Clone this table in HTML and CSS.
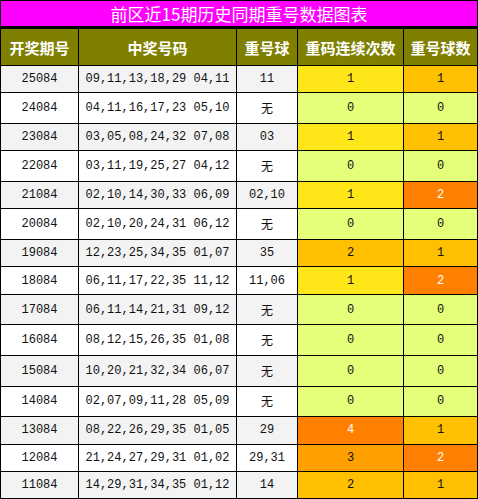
FILE: index.html
```html
<!DOCTYPE html>
<html>
    <head>
        <title>前区近15期历史同期重号数据图表</title>
        <link rel="stylesheet" href="styles.css">
    </head>
    <body>
        <div class="title">前区近15期历史同期重号数据图表</div>
        <table class="chart">
            <thead>
                <tr>
                    <th class="c-issue">开奖期号</th>
                    <th class="c-nums">中奖号码</th>
                    <th class="c-rep">重号球</th>
                    <th class="c-run">重码连续次数</th>
                    <th class="c-cnt">重号球数</th>
                </tr>
            </thead>
            <tbody>
                <tr><td>25084</td><td>09,11,13,18,29 04,11</td><td>11</td><td class="lv1">1</td><td class="lv2">1</td></tr>
                <tr class="empty"><td>24084</td><td>04,11,16,17,23 05,10</td><td>无</td><td class="lv0">0</td><td class="lv0">0</td></tr>
                <tr><td>23084</td><td>03,05,08,24,32 07,08</td><td>03</td><td class="lv1">1</td><td class="lv2">1</td></tr>
                <tr class="empty"><td>22084</td><td>03,11,19,25,27 04,12</td><td>无</td><td class="lv0">0</td><td class="lv0">0</td></tr>
                <tr><td>21084</td><td>02,10,14,30,33 06,09</td><td>02,10</td><td class="lv1">1</td><td class="lv4">2</td></tr>
                <tr class="empty"><td>20084</td><td>02,10,20,24,31 06,12</td><td>无</td><td class="lv0">0</td><td class="lv0">0</td></tr>
                <tr><td>19084</td><td>12,23,25,34,35 01,07</td><td>35</td><td class="lv2">2</td><td class="lv2">1</td></tr>
                <tr><td>18084</td><td>06,11,17,22,35 11,12</td><td>11,06</td><td class="lv1">1</td><td class="lv4">2</td></tr>
                <tr class="empty"><td>17084</td><td>06,11,14,21,31 09,12</td><td>无</td><td class="lv0">0</td><td class="lv0">0</td></tr>
                <tr class="empty"><td>16084</td><td>08,12,15,26,35 01,08</td><td>无</td><td class="lv0">0</td><td class="lv0">0</td></tr>
                <tr class="empty"><td>15084</td><td>10,20,21,32,34 06,07</td><td>无</td><td class="lv0">0</td><td class="lv0">0</td></tr>
                <tr class="empty"><td>14084</td><td>02,07,09,11,28 05,09</td><td>无</td><td class="lv0">0</td><td class="lv0">0</td></tr>
                <tr><td>13084</td><td>08,22,26,29,35 01,05</td><td>29</td><td class="lv4">4</td><td class="lv2">1</td></tr>
                <tr><td>12084</td><td>21,24,27,29,31 01,02</td><td>29,31</td><td class="lv3">3</td><td class="lv4">2</td></tr>
                <tr><td>11084</td><td>14,29,31,34,35 01,12</td><td>14</td><td class="lv2">2</td><td class="lv2">1</td></tr>
            </tbody>
        </table>
    </body>
</html>
```

FILE: styles.css
```css
body {
    margin: 0;
    background-color: white;
}
.title {
    box-sizing: border-box;
    height: 28px;
    line-height: 25px;
    background-color: #ff00ff;
    border: 1px solid black;
    border-bottom-width: 2px;
    color: white;
    font-family: "Noto Sans CJK SC", sans-serif;
    font-size: 17px;
    text-align: center;
}
.chart {
    width: 478px;
    border-collapse: collapse;
    table-layout: fixed;
    font-family: "Liberation Mono", "Noto Sans CJK SC", monospace;
    font-size: 12px;
}
.chart th,
.chart td {
    border: 1px solid black;
    padding: 0;
    text-align: center;
}
.chart th {
    height: 36px;
    background-color: #808000;
    color: white;
    font-family: "Noto Sans CJK SC", sans-serif;
    font-size: 15px;
    font-weight: bold;
}
.c-issue { width: 77px; }
.c-nums { width: 157px; }
.c-rep { width: 60px; }
.c-run { width: 105px; }
.chart td {
    height: 26.4px;
    color: #111;
}
.chart tr.empty td {
    height: 29.6px;
}
.chart tbody tr:nth-child(odd) td {
    background-color: #f3f3f3;
}
/* colour scale for the count columns */
.chart tbody tr td.lv0 { background-color: #e5ff7a; }
.chart tbody tr td.lv1 { background-color: #ffe619; }
.chart tbody tr td.lv2 { background-color: #ffc000; }
.chart tbody tr td.lv3 { background-color: #ffa000; }
.chart tbody tr td.lv4 { background-color: #ff8000; color: white; }
```
